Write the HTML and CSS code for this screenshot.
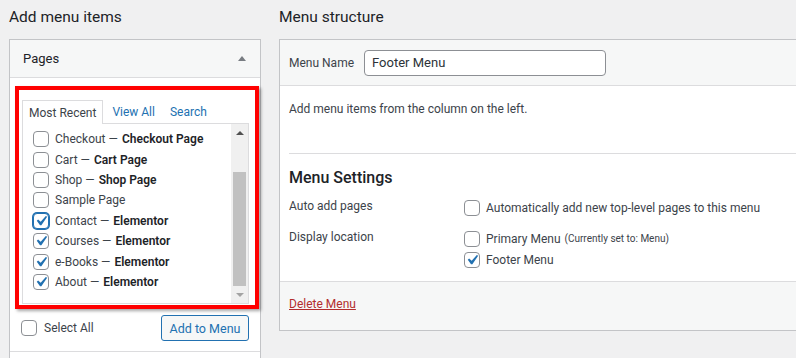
FILE: index.html
```html
<!DOCTYPE html>
<html lang="en">
<head>
  <meta charset="UTF-8">
  <meta name="viewport" content="width=device-width, initial-scale=1.0">
  <title>Menus</title>
  <link rel="stylesheet" href="styles.css">
</head>
<body>
  <div class="wrap">
    <div class="col-left">
      <h2 class="col-title">Add menu items</h2>
      <div class="accordion">
        <div class="acc-head">
          <span>Pages</span>
          <span class="acc-arrow"></span>
        </div>
        <div class="acc-body">
          <div class="highlight">
            <div class="tabs">
              <span class="tab active">Most Recent</span>
              <a class="tab" href="#">View All</a>
              <a class="tab" href="#">Search</a>
            </div>
            <div class="tab-panel">
              <ul class="checklist">
                <li><span class="cb"></span>Checkout &mdash; <span class="post-state">Checkout Page</span></li>
                <li><span class="cb"></span>Cart &mdash; <span class="post-state">Cart Page</span></li>
                <li><span class="cb"></span>Shop &mdash; <span class="post-state">Shop Page</span></li>
                <li><span class="cb"></span>Sample Page</li>
                <li><span class="cb checked focus"><svg viewBox="0 0 20 20"><path d="M14.83 4.89l1.34.94-5.81 8.38H9.02L5.78 9.67l1.34-1.25 2.57 2.4z"/></svg></span>Contact &mdash; <span class="post-state">Elementor</span></li>
                <li><span class="cb checked"><svg viewBox="0 0 20 20"><path d="M14.83 4.89l1.34.94-5.81 8.38H9.02L5.78 9.67l1.34-1.25 2.57 2.4z"/></svg></span>Courses &mdash; <span class="post-state">Elementor</span></li>
                <li><span class="cb checked"><svg viewBox="0 0 20 20"><path d="M14.83 4.89l1.34.94-5.81 8.38H9.02L5.78 9.67l1.34-1.25 2.57 2.4z"/></svg></span>e-Books &mdash; <span class="post-state">Elementor</span></li>
                <li><span class="cb checked"><svg viewBox="0 0 20 20"><path d="M14.83 4.89l1.34.94-5.81 8.38H9.02L5.78 9.67l1.34-1.25 2.57 2.4z"/></svg></span>About &mdash; <span class="post-state">Elementor</span></li>
              </ul>
              <div class="scrollbar">
                <span class="sb-btn"><span class="sb-up"></span></span>
                <span class="sb-track"><span class="sb-thumb"></span></span>
                <span class="sb-btn"><span class="sb-down"></span></span>
              </div>
            </div>
          </div>
          <div class="acc-actions">
            <label class="select-all"><span class="cb"></span>Select All</label>
            <button class="button">Add to Menu</button>
          </div>
        </div>
        <div class="acc-next"></div>
      </div>
    </div>

    <div class="col-right">
      <h2 class="col-title">Menu structure</h2>
      <div class="menu-box">
        <div class="menu-head">
          <label for="menu-name">Menu Name</label>
          <input id="menu-name" class="name-input" type="text" value="Footer Menu">
        </div>
        <div class="menu-body">
          <p class="hint">Add menu items from the column on the left.</p>
          <div class="settings">
            <h3>Menu Settings</h3>
            <div class="setting-row">
              <span class="setting-label">Auto add pages</span>
              <div class="setting-opts">
                <label class="opt"><span class="cb"></span>Automatically add new top-level pages to this menu</label>
              </div>
            </div>
            <div class="setting-row">
              <span class="setting-label">Display location</span>
              <div class="setting-opts">
                <label class="opt"><span class="cb"></span>Primary Menu <span class="note">(Currently set to: Menu)</span></label>
                <label class="opt"><span class="cb checked"><svg viewBox="0 0 20 20"><path d="M14.83 4.89l1.34.94-5.81 8.38H9.02L5.78 9.67l1.34-1.25 2.57 2.4z"/></svg></span>Footer Menu</label>
              </div>
            </div>
          </div>
        </div>
        <div class="menu-foot">
          <a class="delete" href="#">Delete Menu</a>
        </div>
      </div>
    </div>
  </div>
</body>
</html>
```

FILE: styles.css
```css
body {
  font-family: "Segoe UI", Roboto, "Liberation Sans", sans-serif;
  font-size: 12px;
  color: #3c434a;
  margin: 0;
  background-color: #f0f0f1;
  overflow: hidden;
}
.wrap {
  display: flex;
  gap: 18px;
  padding-left: 9px;
}
.col-left {
  width: 252px;
  flex: none;
}
.col-right {
  flex: 1;
  margin-right: -10px;
}
.col-title {
  font-size: 15.5px;
  font-weight: 400;
  color: #1d2327;
  line-height: 20px;
  margin: 7px 0 12px;
}

/* left accordion */
.accordion {
  background-color: #fff;
  border: 1px solid #c3c4c7;
  border-bottom: none;
  height: 400px;
}
.acc-head {
  height: 37px;
  display: flex;
  align-items: center;
  justify-content: space-between;
  padding: 0 14px 0 13px;
  background-color: #f6f7f7;
  border-bottom: 1px solid #dcdcde;
  color: #1d2327;
  font-size: 13px;
}
.acc-arrow {
  width: 0;
  height: 0;
  border-left: 4px solid transparent;
  border-right: 4px solid transparent;
  border-bottom: 5px solid #787c82;
}
.acc-body {
  padding-top: 8px;
}
.highlight {
  margin-left: 5px;
  width: 244px;
  box-sizing: border-box;
  border: 4px solid #ff0000;
  padding: 9px 6px 1px 3px;
  box-shadow: 2px 2px 3px rgba(0, 0, 0, 0.35);
}
.tabs {
  display: flex;
  align-items: flex-end;
}
.tab {
  padding: 0 5px 0 8px;
  height: 23px;
  line-height: 25px;
  color: #2271b1;
  text-decoration: none;
  border: 1px solid transparent;
  border-bottom: none;
}
.tab.active {
  padding: 0 6px;
  color: #3c434a;
  background-color: #fff;
  border-color: #dcdcde;
  margin-bottom: -1px;
  position: relative;
}
.tab-panel {
  height: 181px;
  box-sizing: border-box;
  border: 1px solid #dcdcde;
  display: flex;
  overflow: hidden;
}
.checklist {
  flex: 1;
  list-style: none;
  margin: 0;
  padding: 5px 0 0 10px;
}
.checklist li {
  height: 20.4px;
  display: flex;
  align-items: center;
  white-space: nowrap;
}
.post-state {
  font-weight: 600;
  color: #1d2327;
  margin-left: 4px;
}
.cb {
  width: 16px;
  height: 16px;
  box-sizing: border-box;
  border: 1px solid #8c8f94;
  border-radius: 4px;
  background-color: #fff;
  flex: none;
  margin-right: 6px;
  display: inline-flex;
  align-items: center;
  justify-content: center;
}
.cb svg {
  width: 20px;
  height: 20px;
  fill: #2271b1;
  margin: -3px;
}
.cb.focus {
  border-color: #2271b1;
  box-shadow: 0 0 0 1px #2271b1;
}
.scrollbar {
  width: 17px;
  flex: none;
  background-color: #f0f0f0;
  display: flex;
  flex-direction: column;
}
.sb-btn {
  height: 17px;
  display: flex;
  align-items: center;
  justify-content: center;
  flex: none;
}
.sb-up {
  border-left: 4px solid transparent;
  border-right: 4px solid transparent;
  border-bottom: 4px solid #505050;
}
.sb-down {
  border-left: 4px solid transparent;
  border-right: 4px solid transparent;
  border-top: 4px solid #a3a3a3;
}
.sb-track {
  flex: 1;
  padding: 31px 2px 0;
}
.sb-thumb {
  display: block;
  height: 114px;
  background-color: #c1c1c1;
}
.acc-actions {
  display: flex;
  align-items: center;
  justify-content: space-between;
  padding: 6px 11px 10px 11px;
  border-bottom: 1px solid #dcdcde;
}
.select-all {
  display: flex;
  align-items: center;
}
.select-all .cb {
  margin-right: 7px;
}
.button {
  font-family: inherit;
  font-size: 12.5px;
  height: 26px;
  width: 88px;
  padding: 0;
  color: #2271b1;
  background-color: #f6f7f7;
  border: 1px solid #2271b1;
  border-radius: 3px;
}

/* right menu box */
.menu-box {
  background-color: #fff;
  border: 1px solid #c3c4c7;
}
.menu-head {
  height: 45px;
  display: flex;
  align-items: center;
  padding-left: 9px;
  background-color: #f6f7f7;
  border-bottom: 1px solid #dcdcde;
}
.menu-head label {
  margin-right: 10px;
}
.name-input {
  width: 242px;
  height: 26px;
  box-sizing: border-box;
  border: 1px solid #8c8f94;
  border-radius: 4px;
  padding: 0 7px;
  font-family: inherit;
  font-size: 13px;
  color: #2c3338;
}
.menu-body {
  padding: 0 0 11px 9px;
}
.hint {
  margin: 0;
  padding: 13px 0 34px;
  line-height: 20px;
}
.settings {
  border-top: 1px solid #dcdcde;
  padding-top: 14px;
}
.settings h3 {
  margin: 0 0 9px;
  font-size: 16px;
  font-weight: 500;
  line-height: 20px;
  color: #1d2327;
}
.setting-row {
  display: flex;
  margin-bottom: 10px;
}
.setting-row:last-child {
  margin-bottom: 0;
}
.setting-label {
  width: 175px;
  line-height: 19px;
  flex: none;
}
.setting-opts {
  display: flex;
  flex-direction: column;
}
.opt {
  display: flex;
  align-items: center;
  height: 21px;
}
.note {
  font-size: 10px;
  margin-left: 4px;
}
.menu-foot {
  height: 49px;
  box-sizing: border-box;
  padding: 12px 9px 0;
  line-height: 20px;
  background-color: #f6f7f7;
  border-top: 1px solid #dcdcde;
}
.delete {
  color: #b32d2e;
}
```
